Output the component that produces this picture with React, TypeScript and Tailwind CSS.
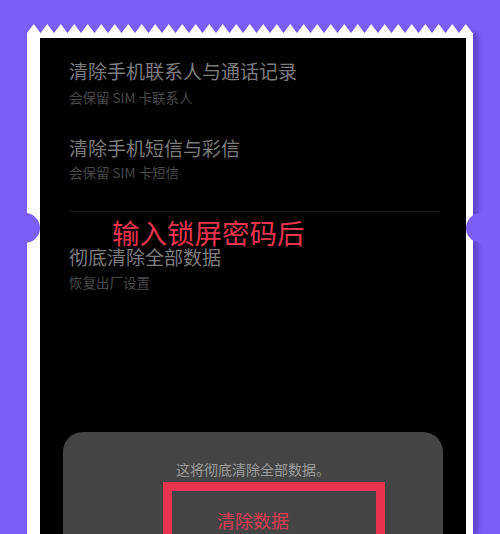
import React from 'react';

const Teeth = () => {
  const w = 446;
  const step = 13.5;
  const pts: string[] = [`0,9`];
  for (let x = 0; x < w; x += step) {
    pts.push(`${x},9`, `${x + step / 2},0`, `${Math.min(x + step, w)},9`);
  }
  pts.push(`${w},9`);
  return (
    <svg width={w} height={9} viewBox={`0 0 ${w} 9`} className="block">
      <polygon points={pts.join(' ')} fill="#ffffff" />
    </svg>
  );
};

export default function App() {
  const font = { fontFamily: '"Noto Sans CJK SC", "Noto Sans", sans-serif' };

  return (
    <div className="relative w-[500px] h-[534px] overflow-hidden bg-[#7b5df8]" style={font}>
      <div className="ml-[27px] pt-[24px] w-[446px]">
        <Teeth />
        <div className="h-[501px] bg-white pt-[5px] pl-[13px] pr-[7px] shadow-[5px_0_5px_rgba(40,20,120,0.35)]">
          <div className="flex h-full flex-col bg-black">
            <div className="pl-[29px] pt-[20px]">
              <div className="text-[19px] leading-[26px] text-[#7c7c7c]">清除手机联系人与通话记录</div>
              <div className="mt-[3px] text-[13.5px] leading-[20px] text-[#484848]">会保留 SIM 卡联系人</div>

              <div className="mt-[28px] text-[19px] leading-[26px] text-[#7c7c7c]">清除手机短信与彩信</div>
              <div className="mt-[1px] text-[13.5px] leading-[20px] text-[#484848]">会保留 SIM 卡短信</div>

              <div className="mt-[29px] mr-[26px] h-px bg-[#1a1a1a]" />

              <div className="mt-[32px] text-[19px] leading-[26px] text-[#7c7c7c]">彻底清除全部数据</div>
              <div className="mt-[2px] text-[13.5px] leading-[20px] text-[#484848]">恢复出厂设置</div>
            </div>

            <div className="mt-auto ml-[23px] w-[380px] h-[102px] rounded-t-[20px] bg-[#444444] pt-[27px] text-center">
              <div className="text-[14px] leading-[20px] text-[#9c9c9c]">这将彻底清除全部数据。</div>
              <div className="mt-[29px] text-[18px] leading-[24px] text-[#dc3a52]">清除数据</div>
            </div>
          </div>
        </div>
      </div>

      {/* annotation overlays */}
      <div className="absolute left-[112px] top-[216px] text-[27.5px] leading-[32px] text-[#e8344e]">输入锁屏密码后</div>
      <div className="absolute left-[163px] top-[482px] w-[222px] h-[90px] border-[9px] border-[#ea3350]" />

      {/* ticket notches */}
      <div className="absolute left-[10px] top-[213px] w-[30px] h-[30px] rounded-full bg-[#7b5df8]" />
      <div className="absolute left-[466px] top-[213px] w-[30px] h-[30px] rounded-full bg-[#7b5df8]" />
    </div>
  );
}
